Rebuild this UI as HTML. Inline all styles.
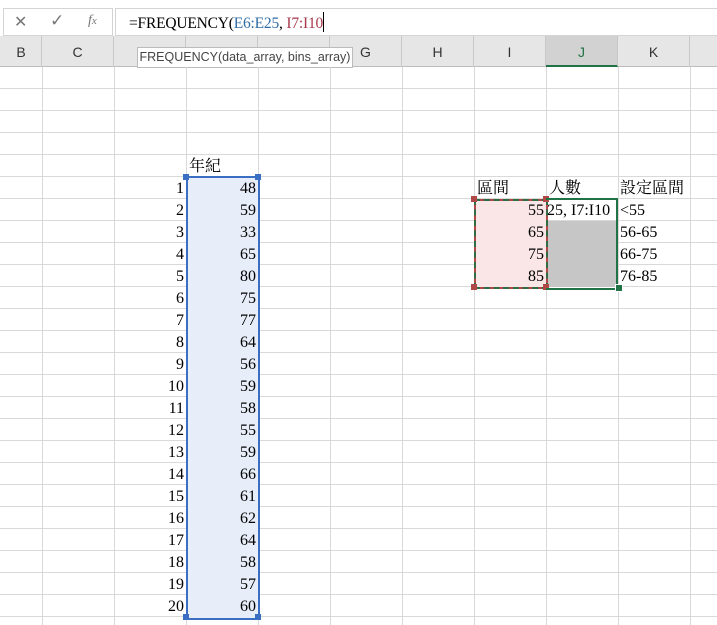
<!DOCTYPE html><html><head><meta charset="utf-8"><style>
body{margin:0;width:717px;height:625px;overflow:hidden;background:#fff;position:relative;font-family:"Liberation Serif","Noto Serif CJK SC",serif;}
.a{position:absolute}
.vl{position:absolute;top:67px;bottom:0;width:1px;background:#d9d9d9}
.hl{position:absolute;left:0;right:0;height:1px;background:#d9d9d9}
.hd{position:absolute;top:36px;height:31px;padding-top:8px;line-height:20px;text-align:center;font:14px "Liberation Sans",sans-serif;color:#333;border-right:1px solid #c8c8c8;box-sizing:border-box}
.c{position:absolute;height:22px;line-height:24px;font-size:16px;color:#000;white-space:nowrap}
.r{text-align:right}
</style></head><body>
<div class="a" style="left:0;top:0;width:717px;height:36px;background:#fff;border-bottom:1px solid #d4d4d4"></div>
<div class="a" style="left:3px;top:8px;width:108px;height:26px;border:1px solid #d4d4d4;background:#fff"></div>
<div class="a" style="left:14px;top:12px;font:16px 'Liberation Sans',sans-serif;color:#777">✕</div>
<div class="a" style="left:50px;top:11px;font:17px 'Liberation Sans',sans-serif;color:#777">✓</div>
<div class="a" style="left:88px;top:13px;font:italic 14px 'Liberation Serif',serif;color:#777">f<span style="font-size:11px">x</span></div>
<div class="a" style="left:115px;top:8px;width:602px;height:26px;border:1px solid #d4d4d4;border-right:none;background:#fff"></div>
<div class="a" style="left:129px;top:12px;font-size:15.5px;letter-spacing:-0.2px;white-space:nowrap">=FREQUENCY(<span style="color:#2f6ea6">E6:E25</span>, <span style="color:#a8384a">I7:I10</span><span style="display:inline-block;width:1px;height:20px;background:#000;vertical-align:-4px"></span></div>
<div class="a" style="left:0;top:36px;width:717px;height:31px;background:#e6e6e6;border-bottom:1px solid #bdbdbd;box-sizing:border-box"></div>
<div class="hd" style="left:-30px;width:72px">&nbsp;&nbsp;&nbsp;&nbsp;&nbsp;&nbsp;&nbsp;&nbsp;B</div>
<div class="hd" style="left:42px;width:72px">C</div>
<div class="hd" style="left:114px;width:72px"></div>
<div class="hd" style="left:186px;width:72px"></div>
<div class="hd" style="left:258px;width:72px"></div>
<div class="hd" style="left:330px;width:72px">G</div>
<div class="hd" style="left:402px;width:72px">H</div>
<div class="hd" style="left:474px;width:72px">I</div>
<div class="hd" style="left:546px;width:72px;background:#d2d2d2;border-bottom:2px solid #217346;color:#217346">J</div>
<div class="hd" style="left:618px;width:72px">K</div>
<div class="a" style="left:137px;top:47px;height:19px;width:214px;border:1px solid #bbb;background:#fff;font:12.5px 'Liberation Sans',sans-serif;line-height:19px;color:#444;white-space:nowrap;text-align:center;overflow:hidden">FREQUENCY(data_array, bins_array)</div>
<div class="vl" style="left:42px"></div><div class="vl" style="left:114px"></div><div class="vl" style="left:186px"></div><div class="vl" style="left:258px"></div><div class="vl" style="left:330px"></div><div class="vl" style="left:402px"></div><div class="vl" style="left:474px"></div><div class="vl" style="left:546px"></div><div class="vl" style="left:618px"></div><div class="vl" style="left:690px"></div>
<div id="rows"></div>
<div class="a" style="left:187px;top:177px;width:71px;height:441px;background:#e8eef9"></div>
<div class="a" style="left:475px;top:199px;width:71px;height:88px;background:#fae6e6"></div>
<div class="a" style="left:547px;top:221px;width:71px;height:66px;background:#c6c6c6"></div>
<script>
var h='';for(var y=88;y<625;y+=22)h+='<div class="hl" style="top:'+y+'px"></div>';document.getElementById('rows').innerHTML=h;
var ages=[48,59,33,65,80,75,77,64,56,59,58,55,59,66,61,62,64,58,57,60],s='';
for(var i=0;i<20;i++){var t=177+i*22;s+='<div class="c r" style="left:114px;width:70px;top:'+t+'px">'+(i+1)+'</div><div class="c r" style="left:186px;width:70px;top:'+t+'px">'+ages[i]+'</div>';}
var bins=[55,65,75,85],lab=['&lt;55','56-65','66-75','76-85'];
for(var i=0;i<4;i++){var t=199+i*22;s+='<div class="c r" style="left:474px;width:70px;top:'+t+'px">'+bins[i]+'</div><div class="c" style="left:620px;top:'+t+'px">'+lab[i]+'</div>';}
document.body.insertAdjacentHTML('beforeend',s);
</script>
<div class="c" style="left:189px;top:155px">年紀</div>
<div class="c" style="left:477px;top:177px">區間</div>
<div class="c" style="left:549px;top:177px">人數</div>
<div class="c" style="left:620px;top:177px">設定區間</div>
<div class="c" style="left:547px;top:199px;width:70px;overflow:hidden;direction:rtl;text-align:left"><span style="direction:ltr;unicode-bidi:embed">25, I7:I10</span></div>
<div class="a" style="left:186px;top:176px;width:70px;height:440px;border:2px solid #3a6fc4"></div>
<div class="a" style="left:183px;top:174px;width:6px;height:6px;background:#3a6fc4"></div>
<div class="a" style="left:255px;top:174px;width:6px;height:6px;background:#3a6fc4"></div>
<div class="a" style="left:183px;top:614px;width:6px;height:6px;background:#3a6fc4"></div>
<div class="a" style="left:255px;top:614px;width:6px;height:6px;background:#3a6fc4"></div>
<div class="a" style="left:474px;top:199px;width:70px;height:86px;border:2px solid #b04848"></div>
<div class="a" style="left:474px;top:199px;width:70px;height:86px;border:2px dashed #2f6b45"></div>
<div class="a" style="left:471px;top:196px;width:6px;height:6px;background:#b04848"></div>
<div class="a" style="left:543px;top:196px;width:6px;height:6px;background:#b04848"></div>
<div class="a" style="left:471px;top:284px;width:6px;height:6px;background:#b04848"></div>
<div class="a" style="left:543px;top:284px;width:6px;height:6px;background:#b04848"></div>
<div class="a" style="left:546px;top:198px;width:70px;height:88px;border:2px solid #217346;border-left:none"></div>
<div class="a" style="left:615px;top:284px;width:6px;height:6px;background:#217346;border:1px solid #fff"></div>
</body></html>
